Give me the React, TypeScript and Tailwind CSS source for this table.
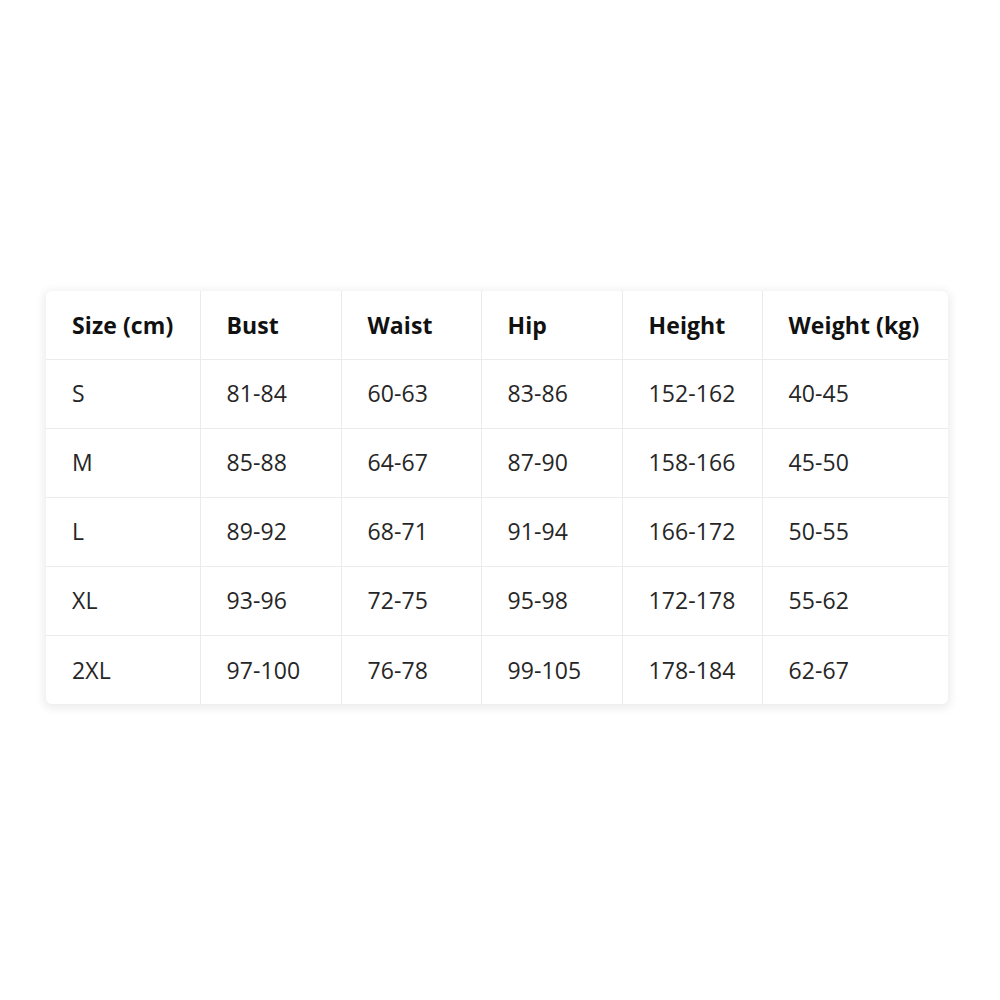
const headers = ["Size (cm)", "Bust", "Waist", "Hip", "Height", "Weight (kg)"];

const rows = [
  ["S", "81-84", "60-63", "83-86", "152-162", "40-45"],
  ["M", "85-88", "64-67", "87-90", "158-166", "45-50"],
  ["L", "89-92", "68-71", "91-94", "166-172", "50-55"],
  ["XL", "93-96", "72-75", "95-98", "172-178", "55-62"],
  ["2XL", "97-100", "76-78", "99-105", "178-184", "62-67"],
];

const widths = ["w-[154px]", "w-[141px]", "w-[140px]", "w-[141px]", "w-[140px]", "w-[186px]"];

export default function App() {
  return (
    <div className="min-h-screen w-full bg-white pt-[291px] pl-[46px] font-['Open_Sans',sans-serif]">
      <div className="w-[902px] rounded-[6px] bg-white overflow-hidden shadow-[0_2px_8px_3px_rgba(0,0,0,0.07)]">
        <table className="w-full table-fixed border-collapse text-[23px]">
          <colgroup>
            {widths.map((w, i) => (
              <col key={i} className={w} />
            ))}
          </colgroup>
          <thead>
            <tr className="h-[68px] border-b border-[#ebebeb]">
              {headers.map((h, i) => (
                <th
                  key={h}
                  className={`pl-[26px] text-left font-bold text-[#111] tracking-[0.1px] ${i > 0 ? "border-l border-[#ebebeb]" : ""}`}
                >
                  {h}
                </th>
              ))}
            </tr>
          </thead>
          <tbody>
            {rows.map((r, ri) => (
              <tr key={ri} className={`h-[69px] ${ri < rows.length - 1 ? "border-b border-[#ebebeb]" : ""}`}>
                {r.map((c, i) => (
                  <td
                    key={i}
                    className={`pl-[26px] text-[#262626] tracking-[0.1px] ${i > 0 ? "border-l border-[#ebebeb]" : ""}`}
                  >
                    {c}
                  </td>
                ))}
              </tr>
            ))}
          </tbody>
        </table>
      </div>
    </div>
  );
}
